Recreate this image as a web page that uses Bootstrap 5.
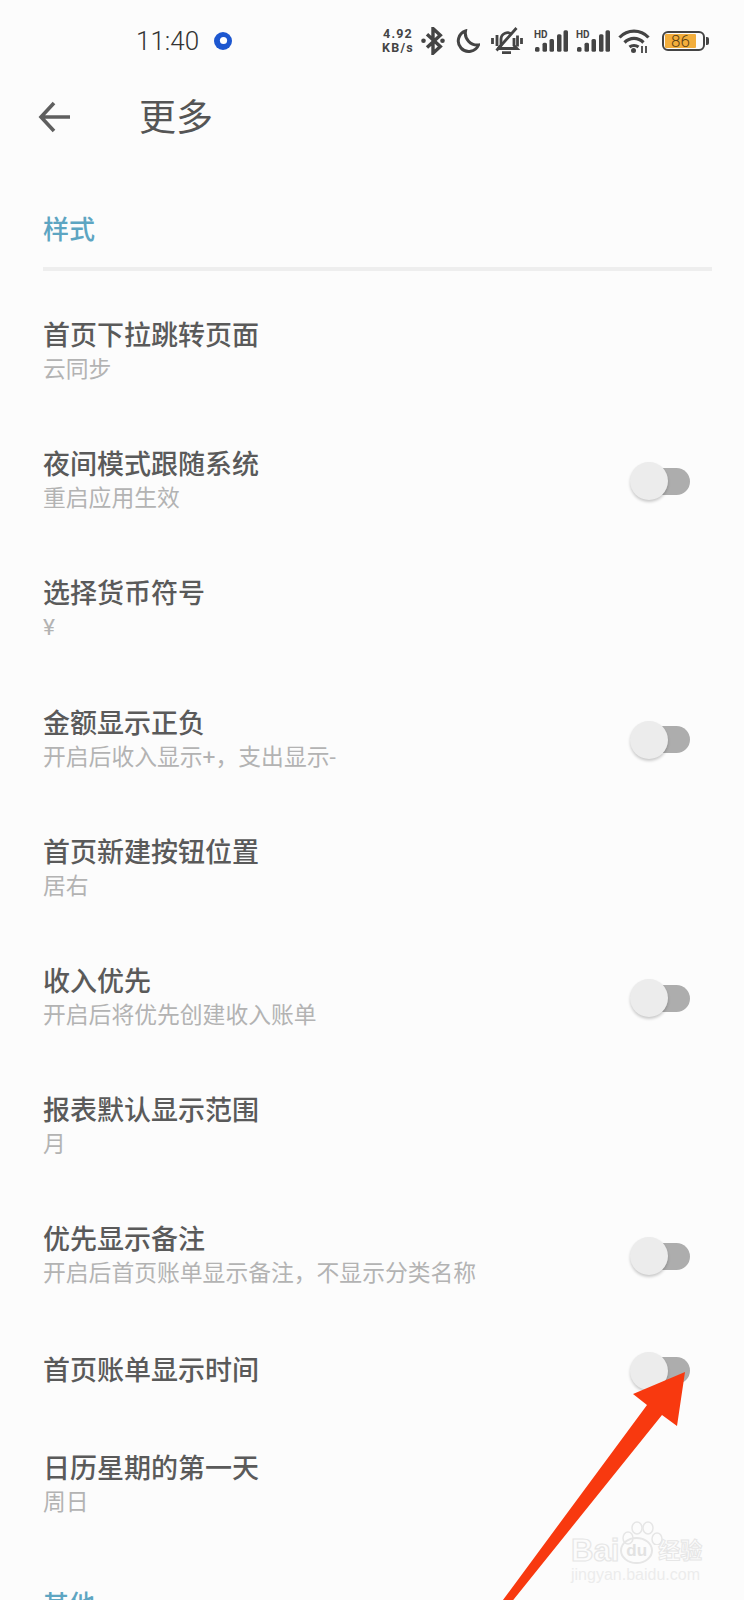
<!DOCTYPE html>
<html lang="en">
<head>
    <meta charset="UTF-8">
    <meta name="viewport" content="width=device-width, initial-scale=1.0">
    <title>更多</title>
    <link href="https://cdn.jsdelivr.net/npm/bootstrap@5.3.3/dist/css/bootstrap.min.css" rel="stylesheet">
    <style>
        html, body { height: 1600px; overflow: hidden; }
        body { background: #fcfcfc; font-family: Roboto, "Noto Sans CJK SC", sans-serif; position: relative; color: #555; }

        .status-bar { height: 82px; padding-left: 136px; color: #444; }
        .clock { font-size: 26px; font-weight: 300; width: 77px; line-height: 1; color: #333; }
        .status-right { margin-left: auto; padding-right: 35px; }
        .net-speed { font-size: 12.5px; font-weight: 700; line-height: 14.5px; width: 34px; color: #444; letter-spacing: 1.2px; }
        .ic-bt { margin-left: 6px; }
        .ic-gap { margin-left: 11px; }
        .ic-sig { margin-left: 8px; }
        .batt-wrap { margin-left: 12px; }
        .batt-num { font-size: 17px; line-height: 1; font-weight: 300; }
        .batt-box { width: 43px; height: 20px; border: 2px solid #444; border-radius: 6px; padding: 1px; }
        .batt-fill { width: 31px; height: 14px; padding-left: 6px; background: #f3ae3c; border-radius: 1px; color: #5a4016; }
        .batt-cap { width: 3px; height: 8px; background: #444; border-radius: 0 2px 2px 0; margin-left: 1px; }

        .tool-bar { height: 70px; padding-left: 38px; }
        .page-title { font-size: 37px; line-height: 1; margin: 2px 0 0 68px; color: #555; font-weight: 400; }

        .section-head { font-size: 26px; line-height: 34px; color: #5da5c2; font-weight: 500; padding-left: 43px; }
        .section-first { margin-top: 61px; }
        .section-later { margin-top: 38px; }
        .section-rule { height: 4px; background: #eeeeee; margin: 20px 32px 17px 43px; }

        .setting-item { background: transparent; border: 0; min-height: 99px; padding: 32.1px 54px 31.1px 43px; color: #555; }
        .setting-name { font-size: 27px; line-height: 33px; font-weight: 500; color: #5a5a5a; }
        .setting-desc { font-size: 22.8px; line-height: 33px; color: #b3b3b3; }

        .switch-track { width: 50px; height: 27px; margin-bottom: 2px; background: #adadad; border-radius: 14px; }
        .switch-thumb { width: 38px; height: 38px; border-radius: 50%; background: #ececec; margin-left: -10px; flex: none; box-shadow: 0 2px 3px rgba(0,0,0,.2); }

        .overlay-arrow { position: absolute; left: 0; top: 0; pointer-events: none; }
        .wm { position: absolute; left: 571px; top: 1521px; width: 140px; color: #fcfcfc; line-height: 1; white-space: nowrap; }
        .wm-paw { display: block; margin: 0 0 -10px 50px; }
        .wm-brand { font-family: "Liberation Sans", sans-serif; font-size: 31px; font-weight: 700; -webkit-text-stroke: 1.2px #e6e6e6; }
        .wm-circle { width: 33px; height: 27px; margin-left: 1px; border: 2px solid #e6e6e6; border-radius: 50%; color: #e2e2e2; font-family: "Liberation Sans", sans-serif; font-size: 17px; font-weight: 700; }
        .wm-cn { font-size: 22px; font-weight: 700; margin-left: 5px; -webkit-text-stroke: 1px #e6e6e6; }
        .wm-url { font-family: "Liberation Sans", sans-serif; font-size: 16px; margin-top: 1px; color: #ececec; }
    </style>
</head>
<body>
    <!-- status bar -->
    <div class="status-bar d-flex align-items-center">
        <span class="clock">11:40</span>
        <svg width="20" height="20" viewBox="0 0 20 20"><circle cx="10" cy="10" r="9" fill="#1d57d0"/><circle cx="10.500" cy="9.500" r="3.600" fill="#fff"/></svg>
        <div class="status-right d-flex align-items-center">
            <div class="net-speed text-center">4.92<br>KB/s</div>
            <svg class="ic-bt" width="24" height="28" viewBox="0 0 24 28" fill="none" stroke="#444" stroke-width="3.400"><path d="M6 7.200L19.300 19.500 12 26.200V1.500L19.300 8.200 6 20.500"/><circle cx="2.500" cy="13.800" r="2.300" fill="#444" stroke="none"/><circle cx="21.500" cy="13.800" r="2.300" fill="#444" stroke="none"/></svg>
            <svg class="ic-gap" width="24" height="24" viewBox="0 0 24 24" fill="none" stroke="#444" stroke-width="3"><path d="M9.500 2A10.500 10.500 0 1 0 22.500 16 12 12 0 0 1 9.500 2z"/></svg>
            <svg class="ic-gap" width="32" height="28" viewBox="0 0 32 28" fill="none" stroke="#444" stroke-width="2.800"><path d="M7 21.500l3-3v-6.500a6.500 6.500 0 0 1 11-4.500M23 11v7.500l3 3H7M11 25.700h9"/><path d="M25.500 1L5.500 23.500M1.500 11v6M6 8v11M26.500 8.500v11M30.500 11v6"/></svg>
            <svg class="ic-gap" width="34" height="24" viewBox="0 0 34 24" fill="#444"><text x="0" y="8.500" font-family="Roboto" font-size="10" font-weight="700">HD</text><rect x="1" y="18" width="4.500" height="4.700" rx="1.500"/><rect x="8.500" y="13.700" width="4.500" height="9" rx="1.500"/><rect x="15.500" y="10" width="4.500" height="12.700" rx="1.500"/><rect x="23" y="5.300" width="4.500" height="17.400" rx="1.500"/><rect x="29.500" y="1.300" width="4.500" height="21.400" rx="1.500"/></svg>
            <svg class="ic-sig" width="34" height="24" viewBox="0 0 34 24" fill="#444"><text x="0" y="8.500" font-family="Roboto" font-size="10" font-weight="700">HD</text><rect x="1" y="18" width="4.500" height="4.700" rx="1.500"/><rect x="8.500" y="13.700" width="4.500" height="9" rx="1.500"/><rect x="15.500" y="10" width="4.500" height="12.700" rx="1.500"/><rect x="23" y="5.300" width="4.500" height="17.400" rx="1.500"/><rect x="29.500" y="1.300" width="4.500" height="21.400" rx="1.500"/></svg>
            <svg class="ms-2" width="32" height="26" viewBox="0 0 32 26" fill="none" stroke="#444" stroke-width="3.200"><path d="M1.500 9.500c8-8.500 21-8.500 29 0M6.500 14.500c5.500-5.500 13.500-5.500 19 0M11.500 19c2.500-2 6.500-2 9 0"/><circle cx="15.500" cy="22.500" r="2.500" fill="#444" stroke="none"/><path stroke-width="1.800" d="M24 18v7M28 18v7"/></svg>
            <div class="batt-wrap d-flex align-items-center">
                <div class="batt-box d-flex"><div class="batt-fill d-flex align-items-center"><span class="batt-num">86</span></div></div>
                <div class="batt-cap"></div>
            </div>
        </div>
    </div>

    <!-- toolbar -->
    <div class="tool-bar d-flex align-items-center">
        <svg width="33" height="32" viewBox="0 0 33 32" fill="none" stroke="#5f5f5f" stroke-width="3.600"><path d="M32 16H4M16 2L3 16l13 14"/></svg>
        <h1 class="page-title">更多</h1>
    </div>

    <div class="section-head section-first">样式</div>
    <div class="section-rule"></div>

    <div class="list-group list-group-flush" id="settings-list"></div>

    <div class="section-head section-later">其他</div>

    <!-- red annotation arrow -->
    <svg class="overlay-arrow" width="744" height="1600" viewBox="0 0 744 1600"><path d="M685 1372L633 1394 647 1405 500 1604 510 1604 662 1415 677 1426z" fill="#f8390f"/></svg>

    <!-- watermark -->
    <div class="wm">
        <svg class="wm-paw" width="46" height="24" viewBox="0 0 46 24" fill="none" stroke="#e6e6e6" stroke-width="1.500"><ellipse cx="7" cy="17" rx="5" ry="6"/><ellipse cx="16" cy="7" rx="5" ry="6"/><ellipse cx="27" cy="7" rx="5" ry="6"/><ellipse cx="36" cy="18" rx="5" ry="6"/></svg>
        <div class="d-flex align-items-center"><span class="wm-brand">Bai</span><span class="wm-circle d-flex align-items-center justify-content-center">du</span><span class="wm-cn">经验</span></div>
        <div class="wm-url">jingyan.baidu.com</div>
    </div>

    <script src="https://cdn.jsdelivr.net/npm/bootstrap@5.3.3/dist/js/bootstrap.bundle.min.js"></script>
    <script>
        const settings = [
            { name: '首页下拉跳转页面', desc: '云同步' },
            { name: '夜间模式跟随系统', desc: '重启应用生效', sw: true },
            { name: '选择货币符号', desc: '¥' },
            { name: '金额显示正负', desc: '开启后收入显示+，支出显示-', sw: true },
            { name: '首页新建按钮位置', desc: '居右' },
            { name: '收入优先', desc: '开启后将优先创建收入账单', sw: true },
            { name: '报表默认显示范围', desc: '月' },
            { name: '优先显示备注', desc: '开启后首页账单显示备注，不显示分类名称', sw: true },
            { name: '首页账单显示时间', sw: true },
            { name: '日历星期的第一天', desc: '周日' }
        ];
        const list = document.getElementById('settings-list');
        settings.forEach(s => {
            list.innerHTML += `
                <div class="list-group-item setting-item d-flex align-items-center justify-content-between">
                    <div>
                        <div class="setting-name">${s.name}</div>
                        ${s.desc ? `<div class="setting-desc">${s.desc}</div>` : ''}
                    </div>
                    ${s.sw ? '<div class="switch-track d-flex align-items-center"><div class="switch-thumb"></div></div>' : ''}
                </div>`;
        });
    </script>
</body>
</html>
